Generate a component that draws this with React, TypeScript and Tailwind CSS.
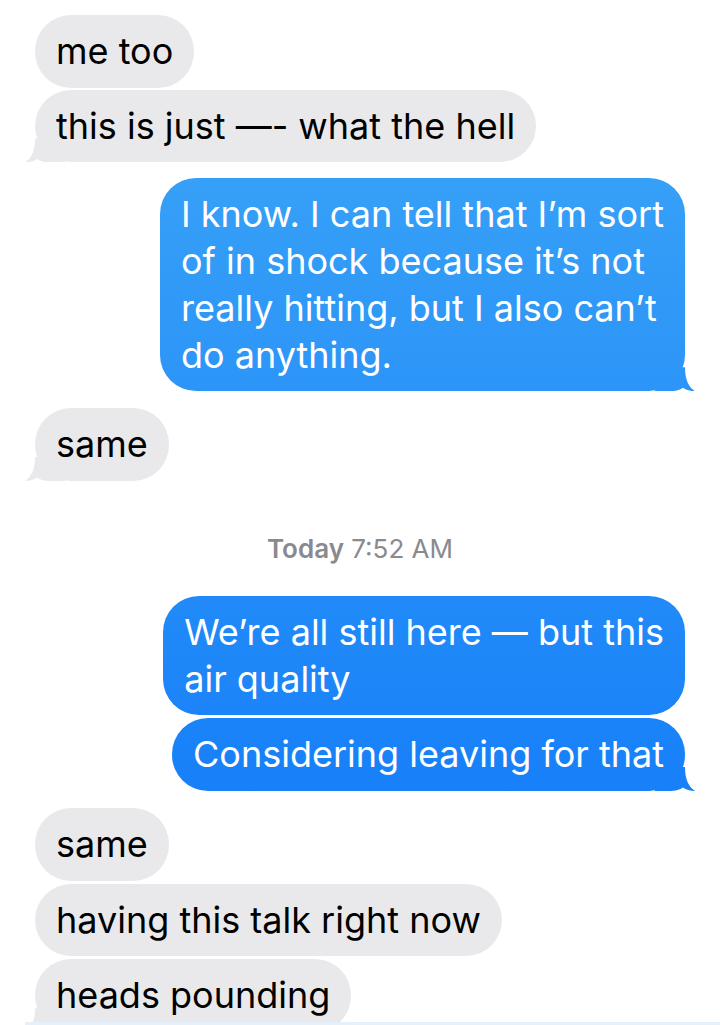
import React from 'react';

type Side = 'in' | 'out';

const outFill = 'bg-fixed bg-gradient-to-b from-[#3fa8f7] to-[#0b73f8]';

// tail drawn as a clipped box so the blue one shares the page-fixed gradient
const Tail = ({ side }: { side: Side }) =>
  side === 'out' ? (
    <div
      className={`absolute -right-[10px] bottom-0 h-[24px] w-[40px] ${outFill} [clip-path:path('M30_0_C30_13_34_20_40_24_C35_24_31_22.5_28_20.5_C25_22.5_21_24_15_24_L0_24_L0_0_Z')]`}
    />
  ) : (
    <div className="absolute -left-[10px] bottom-0 h-[24px] w-[40px] bg-[#e9e9eb] [clip-path:path('M10_0_C10_13_6_20_0_24_C5_24_9_22.5_12_20.5_C15_22.5_19_24_25_24_L40_24_L40_0_Z')]" />
  );

const Bubble = ({
  side,
  tail,
  lines,
  className = '',
}: {
  side: Side;
  tail?: boolean;
  lines: string[];
  className?: string;
}) => {
  const isOut = side === 'out';
  return (
    <div
      className={`relative rounded-[36px] px-[21px] py-[13px] text-[36px] leading-[46.7px] whitespace-nowrap ${
        isOut ? `self-end ${outFill} text-white` : 'self-start bg-[#e9e9eb] text-black'
      } ${className}`}
    >
      {tail && <Tail side={side} />}
      <span className="relative">
        {lines.map((l, i) => (
          <React.Fragment key={i}>
            {i > 0 && <br />}
            {l}
          </React.Fragment>
        ))}
      </span>
    </div>
  );
};

export default function App() {
  return (
    <div className="w-[720px] h-[1025px] bg-white font-['Inter','Noto_Sans',sans-serif] overflow-hidden">
      <div className="h-[1022px] overflow-hidden flex flex-col px-[35px] pt-[15px]">
        <Bubble side="in" lines={['me too']} />
        <Bubble side="in" tail lines={['this is just —- what the hell']} className="mt-[2px]" />

        <Bubble
          side="out"
          tail
          className="mt-[16px]"
          lines={[
            'I know. I can tell that I’m sort',
            'of in shock because it’s not',
            'really hitting, but I also can’t',
            'do anything.',
          ]}
        />

        <Bubble side="in" tail lines={['same']} className="mt-[17px]" />

        <div className="mt-[52px] mb-[31px] text-center text-[26px] leading-[32px] text-[#8a8a8e]">
          <span className="font-semibold">Today</span> 7:52 AM
        </div>

        <Bubble side="out" lines={['We’re all still here — but this', 'air quality']} />
        <Bubble side="out" tail lines={['Considering leaving for that']} className="mt-[3px]" />

        <Bubble side="in" lines={['same']} className="mt-[17px]" />
        <Bubble side="in" lines={['having this talk right now']} className="mt-[3px]" />
        <Bubble side="in" tail lines={['heads pounding']} className="mt-[3px] shrink-0" />
      </div>
      <div className="h-[3px] ml-[25px] bg-[#e6f0fb]" />
    </div>
  );
}
